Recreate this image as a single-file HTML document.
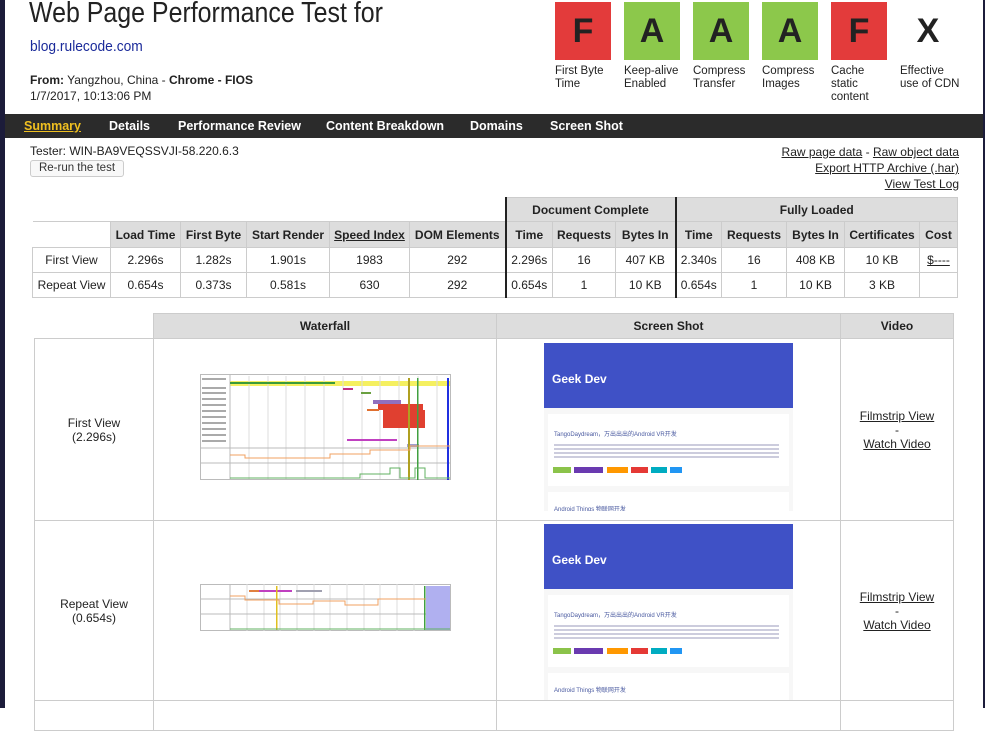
<!DOCTYPE html>
<html><head><meta charset="utf-8"><style>
*{box-sizing:border-box;margin:0;padding:0}
body{width:985px;height:708px;overflow:hidden;background:#fff;font-family:"Liberation Sans",Arial,sans-serif;color:#222;position:relative}
.a{position:absolute}
.bl{background:#1c1c3a}
.g{position:absolute;top:2px;width:56px;height:58px;font:bold 34px "Liberation Sans",sans-serif;text-align:center;line-height:58px;color:#222}
.gl{position:absolute;top:65px;font-size:11.5px;line-height:13px;color:#222}
.nav{position:absolute;left:5px;top:114px;width:978px;height:24px;background:#2b2b2b}
.nav span{position:absolute;top:5px;color:#fff;font-weight:bold;font-size:12.5px}
table{border-collapse:collapse;position:absolute}
td,th{border:1px solid #ccc;text-align:center;font-size:12px;font-weight:normal;padding:0}
th{background:#ddd;font-weight:bold}
a{color:#222}
.thick{border-left:2px solid #222}
</style></head><body>
<div class="a bl" style="left:0;top:0;width:5px;height:708px"></div>
<div class="a bl" style="left:983px;top:0;width:2px;height:708px"></div>
<div class="a" style="left:29px;top:-3px;font-size:29px;color:#222;transform:scaleX(0.86);transform-origin:0 0;white-space:nowrap">Web Page Performance Test for</div>
<div class="a" style="left:30px;top:38px;font-size:15px;color:#1a2a9a;transform:scaleX(0.92);transform-origin:0 0">blog.rulecode.com</div>
<div class="a" style="left:30px;top:73px;font-size:12px"><b>From:</b> Yangzhou, China - <b>Chrome - FIOS</b></div>
<div class="a" style="left:30px;top:89px;font-size:12px">1/7/2017, 10:13:06 PM</div>

<div class="g" style="left:555px;background:#e33b3b">F</div>
<div class="g" style="left:624px;background:#8cc84b">A</div>
<div class="g" style="left:693px;background:#8cc84b">A</div>
<div class="g" style="left:762px;background:#8cc84b">A</div>
<div class="g" style="left:831px;background:#e33b3b">F</div>
<div class="g" style="left:900px;background:#fff">X</div>
<div class="gl" style="left:555px">First Byte<br>Time</div>
<div class="gl" style="left:624px">Keep-alive<br>Enabled</div>
<div class="gl" style="left:693px">Compress<br>Transfer</div>
<div class="gl" style="left:762px">Compress<br>Images</div>
<div class="gl" style="left:831px">Cache<br>static<br>content</div>
<div class="gl" style="left:900px">Effective<br>use of CDN</div>

<div class="nav">
<span style="left:19px;color:#f0c020;text-decoration:underline">Summary</span>
<span style="left:104px">Details</span>
<span style="left:173px">Performance Review</span>
<span style="left:321px">Content Breakdown</span>
<span style="left:465px">Domains</span>
<span style="left:545px">Screen Shot</span>
</div>
<div class="a" style="left:30px;top:144px;font-size:12px">Tester: WIN-BA9VEQSSVJI-58.220.6.3</div>
<div class="a" style="left:30px;top:160px;width:94px;height:17px;border:1px solid #ccc;border-radius:3px;font-size:11.5px;line-height:15px;text-align:center;color:#333;background:#f8f8f8">Re-run the test</div>
<div class="a" style="right:26px;top:144px;font-size:12px;text-align:right;line-height:16px"><a href="#">Raw page data</a> - <a href="#">Raw object data</a><br><a href="#">Export HTTP Archive (.har)</a><br><a href="#">View Test Log</a></div>

<table style="left:32px;top:197px;width:926px">
<tr style="height:24px"><td colspan="6" style="border:none;border-bottom:1px solid #ccc"></td><th colspan="3" class="thick">Document Complete</th><th colspan="5" class="thick">Fully Loaded</th></tr>
<tr style="height:26px"><td style="border:none;border-bottom:1px solid #ccc;width:78px"></td><th style="width:70px">Load Time</th><th style="width:66px">First Byte</th><th style="width:83px">Start Render</th><th style="width:80px"><u>Speed Index</u></th><th style="width:96px">DOM Elements</th><th class="thick" style="width:47px">Time</th><th style="width:63px">Requests</th><th style="width:60px">Bytes In</th><th class="thick" style="width:46px">Time</th><th style="width:65px">Requests</th><th style="width:58px">Bytes In</th><th style="width:75px">Certificates</th><th>Cost</th></tr>
<tr style="height:25px"><td>First View</td><td>2.296s</td><td>1.282s</td><td>1.901s</td><td>1983</td><td>292</td><td class="thick">2.296s</td><td>16</td><td>407 KB</td><td class="thick">2.340s</td><td>16</td><td>408 KB</td><td>10 KB</td><td><u>$----</u></td></tr>
<tr style="height:25px"><td>Repeat View</td><td>0.654s</td><td>0.373s</td><td>0.581s</td><td>630</td><td>292</td><td class="thick">0.654s</td><td>1</td><td>10 KB</td><td class="thick">0.654s</td><td>1</td><td>10 KB</td><td>3 KB</td><td></td></tr>
</table>

<table style="left:34px;top:313px;width:920px">
<tr style="height:25px"><td style="border:none;border-bottom:1px solid #ccc;width:119px"></td><th style="width:343px">Waterfall</th><th style="width:344px">Screen Shot</th><th>Video</th></tr>
<tr style="height:182px"><td>First View<br>(2.296s)</td><td></td><td></td><td><a href="#">Filmstrip View</a><br>-<br><a href="#">Watch Video</a></td></tr>
<tr style="height:180px"><td>Repeat View<br>(0.654s)</td><td></td><td></td><td><a href="#">Filmstrip View</a><br>-<br><a href="#">Watch Video</a></td></tr>
<tr style="height:30px"><td></td><td></td><td></td><td></td></tr>
</table>

<!-- waterfall 1 -->
<svg class="a" style="left:200px;top:374px" width="251" height="106" viewBox="0 0 251 106">
<rect x="0.5" y="0.5" width="250" height="105" fill="#fff" stroke="#bbb"/>
<rect x="30" y="7" width="220" height="5" fill="#f5f060"/>
<g stroke="#ddd"><path d="M49 2V105M68 2V105M86 2V105M105 2V105M124 2V105M143 2V105M162 2V105M180 2V105M199 2V105M218 2V105M237 2V105"/></g>
<g stroke="#bbb"><path d="M30 0V106M0 74H250M0 89H250"/></g>
<g fill="#aaa"><rect x="2" y="4" width="24" height="2"/><rect x="2" y="13" width="24" height="2"/><rect x="2" y="18" width="24" height="2"/><rect x="2" y="24" width="24" height="2"/><rect x="2" y="30" width="24" height="2"/><rect x="2" y="36" width="24" height="2"/><rect x="2" y="42" width="24" height="2"/><rect x="2" y="48" width="24" height="2"/><rect x="2" y="54" width="24" height="2"/><rect x="2" y="60" width="24" height="2"/><rect x="2" y="66" width="24" height="2"/></g>
<rect x="30" y="8" width="105" height="2" fill="#3a9a3a"/>
<rect x="143" y="14" width="10" height="2" fill="#c03080"/>
<rect x="161" y="18" width="10" height="2" fill="#6aa040"/>
<rect x="173" y="26" width="28" height="4" fill="#9070c0"/>
<rect x="178" y="30" width="45" height="6" fill="#e04030"/>
<rect x="183" y="36" width="42" height="18" fill="#e04030"/>
<rect x="167" y="35" width="12" height="2" fill="#e07030"/>
<rect x="147" y="65" width="50" height="2" fill="#c040c0"/>
<rect x="207" y="70" width="12" height="3" fill="#a0a0d0"/>
<rect x="208" y="4" width="2" height="102" fill="#b0a020"/>
<rect x="217" y="4" width="1.5" height="102" fill="#40a040"/>
<rect x="247" y="4" width="2" height="102" fill="#2030e0"/>
<path d="M30 81H45V84H130V80H170V76H210V72H250" stroke="#f0a060" fill="none"/>
<path d="M30 104H160V100H190V94H200V104H215V94H225V104H250" stroke="#60b060" fill="none"/>
</svg>
<!-- waterfall 2 -->
<svg class="a" style="left:200px;top:584px" width="251" height="47" viewBox="0 0 251 47">
<rect x="0.5" y="0.5" width="250" height="46" fill="#fff" stroke="#bbb"/>
<g stroke="#ddd"><path d="M47 0V47M64 0V47M80 0V47M97 0V47M114 0V47M130 0V47M147 0V47M164 0V47M180 0V47M197 0V47M214 0V47"/></g>
<path d="M30 0V47M0 15H250M0 30H250" stroke="#bbb"/>
<rect x="226" y="2" width="24" height="44" fill="#b0b0f0"/>
<rect x="49" y="6" width="10" height="2" fill="#e08040"/><rect x="59" y="6" width="33" height="2" fill="#c040c0"/><rect x="96" y="6" width="26" height="2" fill="#a0a0b0"/>
<rect x="76" y="2" width="1.5" height="44" fill="#e0c020"/><rect x="224" y="2" width="1.5" height="44" fill="#40a040"/>
<path d="M30 12H45V16H79V20H113V17H145V21H178V15H226" stroke="#f0a060" fill="none"/>
<path d="M30 45H250" stroke="#60b060"/>
</svg>

<!-- screenshot 1 -->
<div class="a" style="left:544px;top:343px;width:249px;height:168px;background:#f7f7f7;overflow:hidden">
<div style="height:65px;background:#3f51c6;position:relative"><div style="position:absolute;left:8px;top:29px;color:#fff;font-weight:bold;font-size:12px">Geek Dev</div></div>
<div style="margin:6px 4px;background:#fff;height:72px;position:relative;font-size:6px;color:#556">
<div style="position:absolute;left:6px;top:15px;color:#4a5aa0">TangoDaydream，万出出出的Android VR开发</div>
<div style="position:absolute;left:6px;top:28px;width:225px;height:16px;background:repeating-linear-gradient(#fff 0 2px,#ccd 2px 4px)"></div>
<div style="position:absolute;left:5px;top:53px;width:18px;height:6px;background:#8bc34a"></div><div style="position:absolute;left:26px;top:53px;width:29px;height:6px;background:#6a3ab0"></div><div style="position:absolute;left:59px;top:53px;width:21px;height:6px;background:#ff9800"></div><div style="position:absolute;left:83px;top:53px;width:17px;height:6px;background:#e53935"></div><div style="position:absolute;left:103px;top:53px;width:16px;height:6px;background:#00acc1"></div><div style="position:absolute;left:122px;top:53px;width:12px;height:6px;background:#2196f3"></div>
</div>
<div style="margin:0 4px;background:#fff;height:30px;position:relative;font-size:6px"><div style="position:absolute;left:6px;top:12px;color:#4a5aa0">Android Things 物联网开发</div></div>
</div>
<!-- screenshot 2 -->
<div class="a" style="left:544px;top:524px;width:249px;height:176px;background:#f7f7f7;overflow:hidden">
<div style="height:65px;background:#3f51c6;position:relative"><div style="position:absolute;left:8px;top:29px;color:#fff;font-weight:bold;font-size:12px">Geek Dev</div></div>
<div style="margin:6px 4px;background:#fff;height:72px;position:relative;font-size:6px;color:#556">
<div style="position:absolute;left:6px;top:15px;color:#4a5aa0">TangoDaydream，万出出出的Android VR开发</div>
<div style="position:absolute;left:6px;top:28px;width:225px;height:16px;background:repeating-linear-gradient(#fff 0 2px,#ccd 2px 4px)"></div>
<div style="position:absolute;left:5px;top:53px;width:18px;height:6px;background:#8bc34a"></div><div style="position:absolute;left:26px;top:53px;width:29px;height:6px;background:#6a3ab0"></div><div style="position:absolute;left:59px;top:53px;width:21px;height:6px;background:#ff9800"></div><div style="position:absolute;left:83px;top:53px;width:17px;height:6px;background:#e53935"></div><div style="position:absolute;left:103px;top:53px;width:16px;height:6px;background:#00acc1"></div><div style="position:absolute;left:122px;top:53px;width:12px;height:6px;background:#2196f3"></div>
</div>
<div style="margin:0 4px;background:#fff;height:30px;position:relative;font-size:6px"><div style="position:absolute;left:6px;top:12px;color:#4a5aa0">Android Things 物联网开发</div></div>
</div>
</body></html>
